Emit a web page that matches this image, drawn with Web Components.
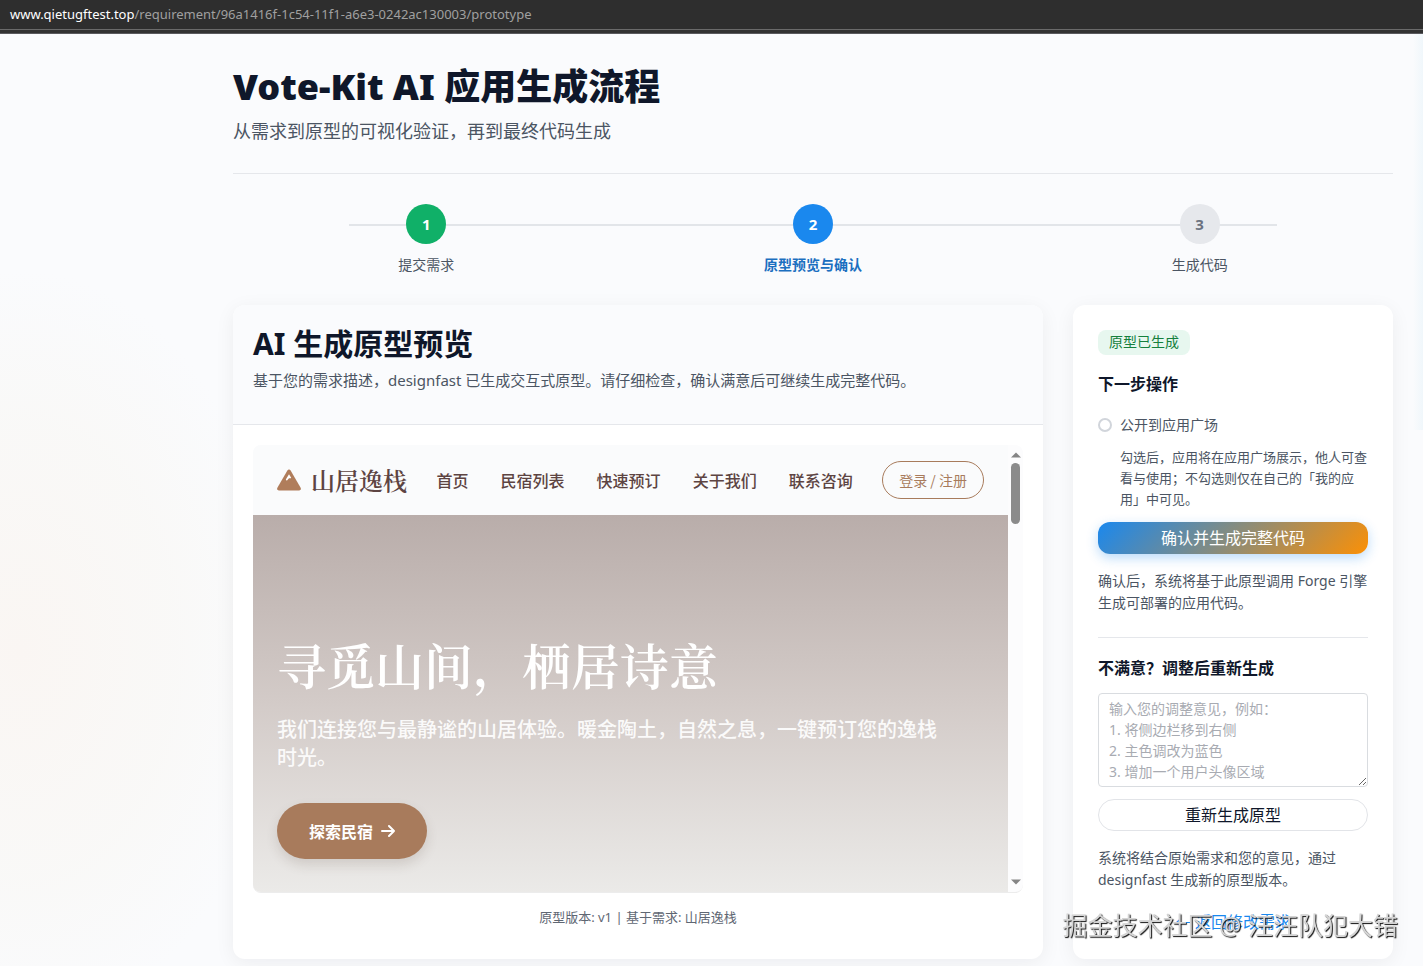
<!DOCTYPE html>
<html lang="zh-CN">
<head>
<meta charset="utf-8">
<title>Vote-Kit AI 应用生成流程</title>
<style>
    :root {
        --vk-font: "Noto Sans", "Noto Sans CJK SC", sans-serif;
        --vk-text: #0f172a;
        --vk-muted: #4b5563;
        --vk-line: #e5e7eb;
        --vk-primary: #1a88ee;
        --vk-clay: #a87b5c;
        --vk-shadow: 0 4px 20px rgba(15, 23, 42, 0.06);
    }
    body {
        margin: 0;
        min-height: 100vh;
        color: var(--vk-text);
        font-family: var(--vk-font);
        background:
            radial-gradient(ellipse 260px 380px at 20px 650px, #faf6f3, rgba(249, 248, 246, 0.8) 60%, transparent),
            linear-gradient(to right, transparent calc(100% - 10px), #f0f7fb) no-repeat 0 0 / 100% 430px,
            #fafbfd;
    }
</style>
</head>
<body>
<address-bar host="www.qietugftest.top" path="/requirement/96a1416f-1c54-11f1-a6e3-0242ac130003/prototype"></address-bar>
<app-page>
    <page-header heading="Vote-Kit AI 应用生成流程">从需求到原型的可视化验证，再到最终代码生成</page-header>
    <step-bar>
        <step-item number="1" state="done">提交需求</step-item>
        <step-item number="2" state="active">原型预览与确认</step-item>
        <step-item number="3">生成代码</step-item>
    </step-bar>
    <main-columns>
        <preview-card heading="AI 生成原型预览">
            <span slot="desc">基于您的需求描述，designfast 已生成交互式原型。请仔细检查，确认满意后可继续生成完整代码。</span>
            <inn-site></inn-site>
            <span slot="footer">原型版本: v1 | 基于需求: 山居逸栈</span>
        </preview-card>
        <action-panel></action-panel>
    </main-columns>
</app-page>
<water-mark>掘金技术社区 @ 汪汪队犯大错</water-mark>

<script>
    // attaches an open shadow root and fills it
    function render(el, html) {
        el.attachShadow({ mode: 'open' }).innerHTML = html;
    }

    class AddressBar extends HTMLElement {
        constructor() {
            super();
            render(this, `
            <style>
                :host {
                    display: block;
                    height: 34px;
                    box-sizing: border-box;
                    padding: 0 10px;
                    font-size: 13px;
                    line-height: 28px;
                    color: #a0a0a0;
                    background: linear-gradient(#2e2e2e 29px, #6a6a6a 29px, #6a6a6a 30px, #333 30px, #333 33px, #5a5a5e 33px);
                }
                b { font-weight: 400; color: #fff; }
            </style>
            <div><b>${this.getAttribute('host')}</b>${this.getAttribute('path')}</div>
            `);
        }
    }

    class AppPage extends HTMLElement {
        constructor() {
            super();
            render(this, `
            <style>
                :host { display: block; padding: 32px 30px 7px 233px; }
            </style>
            <slot></slot>
            `);
        }
    }

    class PageHeader extends HTMLElement {
        constructor() {
            super();
            render(this, `
            <style>
                :host {
                    display: block;
                    padding-bottom: 26px;
                    border-bottom: 1px solid var(--vk-line);
                }
                h1 {
                    margin: 0 0 7px;
                    font-size: 36px;
                    line-height: 42px;
                    font-weight: 900;
                }
                p {
                    margin: 0;
                    font-size: 18px;
                    line-height: 32px;
                    color: var(--vk-muted);
                }
            </style>
            <h1>${this.getAttribute('heading')}</h1>
            <p><slot></slot></p>
            `);
        }
    }

    class StepBar extends HTMLElement {
        constructor() {
            super();
            render(this, `
            <style>
                :host {
                    display: grid;
                    grid-template-columns: repeat(3, 1fr);
                    padding: 30px 0;
                    /* the rail runs behind the circles */
                    background: linear-gradient(#e2e5e9, #e2e5e9) no-repeat center 50px / 80% 2px;
                }
            </style>
            <slot></slot>
            `);
        }
    }

    class StepItem extends HTMLElement {
        constructor() {
            super();
            render(this, `
            <style>
                :host {
                    display: flex;
                    flex-direction: column;
                    align-items: center;
                    gap: 10px;
                    font-size: 14px;
                    line-height: 22px;
                    color: var(--vk-muted);
                }
                i {
                    width: 40px;
                    height: 40px;
                    border-radius: 50%;
                    background: #e6e8ec;
                    color: #6b7280;
                    font-size: 15px;
                    font-style: normal;
                    font-weight: 700;
                    line-height: 40px;
                    text-align: center;
                }
                :host([state="done"]) i { background: #10b068; color: #fff; }
                :host([state="active"]) i { background: var(--vk-primary); color: #fff; }
                :host([state="active"]) { color: #1b6fc0; font-weight: 700; }
            </style>
            <i>${this.getAttribute('number')}</i>
            <span><slot></slot></span>
            `);
        }
    }

    class MainColumns extends HTMLElement {
        constructor() {
            super();
            render(this, `
            <style>
                :host {
                    display: grid;
                    grid-template-columns: minmax(0, 1fr) 320px;
                    gap: 30px;
                    margin-top: -1px;
                }
            </style>
            <slot></slot>
            `);
        }
    }

    class PreviewCard extends HTMLElement {
        constructor() {
            super();
            render(this, `
            <style>
                :host {
                    display: block;
                    border-radius: 12px;
                    background: #fff;
                    box-shadow: var(--vk-shadow);
                    overflow: hidden;
                }
                header {
                    padding: 20px 20px 32px;
                    background: #fafbfd;
                    border-bottom: 1px solid var(--vk-line);
                }
                h2 { margin: 0; font-size: 30px; line-height: 38px; }
                p {
                    margin: 5px 0 0;
                    font-size: 15px;
                    line-height: 24px;
                    color: var(--vk-muted);
                }
                .body { padding: 20px 20px 0; }
                footer {
                    padding: 12px 20px 30px;
                    font-size: 13px;
                    line-height: 24px;
                    color: #5f6773;
                    text-align: center;
                }
            </style>
            <header>
                <h2>${this.getAttribute('heading')}</h2>
                <p><slot name="desc"></slot></p>
            </header>
            <div class="body"><slot></slot></div>
            <footer><slot name="footer"></slot></footer>
            `);
        }
    }

    // the generated site shown inside the preview frame
    class InnSite extends HTMLElement {
        constructor() {
            super();
            const links = ['首页', '民宿列表', '快速预订', '关于我们', '联系咨询'];
            render(this, `
            <style>
                :host {
                    display: grid;
                    grid-template-columns: minmax(0, 1fr) 15px;
                    border-bottom: 1px solid #ececec;
                    border-radius: 8px;
                    overflow: hidden;
                    background: #fcfcfd;
                    font-family: "Noto Sans CJK SC", sans-serif;
                }
                nav {
                    display: flex;
                    align-items: center;
                    justify-content: space-between;
                    height: 70px;
                    box-sizing: border-box;
                    padding: 0 24px;
                    background: #fafbfc;
                }
                a { color: #5d4442; text-decoration: none; }
                .logo {
                    display: flex;
                    align-items: center;
                    gap: 10px;
                    font: 600 24px/32px "Noto Serif CJK SC", "Noto Serif SC", "Noto Sans CJK SC", serif;
                }
                .links {
                    display: flex;
                    gap: 32px;
                    font-size: 16px;
                    font-weight: 500;
                }
                nav button {
                    height: 38px;
                    padding: 0 16px;
                    border: 1px solid var(--vk-clay);
                    border-radius: 19px;
                    background: none;
                    color: var(--vk-clay);
                    font: 14px/20px "Noto Sans CJK SC", sans-serif;
                }
                .hero {
                    padding: 120px 64px 33px 24px;
                    color: #fff;
                    background: linear-gradient(#b9adaa, #d3cbc8 50%, #ebeae8);
                }
                h1 {
                    margin: 0 0 22px;
                    font: 600 49px/58px "Noto Serif CJK SC", "Noto Serif SC", "Noto Sans CJK SC", serif;
                }
                p { margin: 0 0 32px; font-size: 20px; font-weight: 500; line-height: 28px; opacity: 0.9; }
                .hero button {
                    display: flex;
                    align-items: center;
                    gap: 8px;
                    height: 56px;
                    padding: 0 32px;
                    border: 0;
                    border-radius: 28px;
                    background: var(--vk-clay);
                    color: #fff;
                    box-shadow: 0 6px 12px rgba(80, 60, 50, 0.15);
                    font: 700 16px/24px "Noto Sans CJK SC", sans-serif;
                }
                .scroll {
                    display: flex;
                    flex-direction: column;
                    align-items: center;
                    padding: 7px 0;
                }
                .thumb {
                    width: 9px;
                    height: 61px;
                    margin-top: 5px;
                    border-radius: 5px;
                    background: #8b8b8b;
                }
                .scroll svg:last-child { margin-top: auto; }
            </style>
            <div>
                <nav>
                    <a class="logo" href="#">
                        <svg width="24" height="22" viewBox="0 0 24 22"><path fill="#b07d5b" d="M12 0.500C12.700 0.500 13.200 0.900 13.600 1.500L23.500 18.500C24.400 20.100 23.700 21.500 22 21.500H2C0.300 21.500 -0.400 20.100 0.500 18.500L10.400 1.500C10.800 0.900 11.300 0.500 12 0.500Z"/><path fill="#fff" d="M12 5.200L8.800 10.600L9.800 11.800L12 9.200L13.800 9.200L14.200 8.800Z"/></svg>
                        山居逸栈
                    </a>
                    <div class="links">${links.map(t => `<a href="#">${t}</a>`).join('')}</div>
                    <button type="button">登录 / 注册</button>
                </nav>
                <section class="hero">
                    <h1>寻觅山间，栖居诗意</h1>
                    <p>我们连接您与最静谧的山居体验。暖金陶土，自然之息，一键预订您的逸栈时光。</p>
                    <button type="button">探索民宿
                        <svg width="14" height="14" viewBox="0 0 14 14" fill="none" stroke="#fff" stroke-width="2" stroke-linecap="round" stroke-linejoin="round"><path d="M1 7H13M8 2L13 7L8 12"/></svg>
                    </button>
                </section>
            </div>
            <div class="scroll">
                <svg width="10" height="6" viewBox="0 0 10 6"><path fill="#858585" d="M5 0.500L10 5.500H0Z"/></svg>
                <div class="thumb"></div>
                <svg width="10" height="6" viewBox="0 0 10 6"><path fill="#858585" d="M0 0.500H10L5 5.500Z"/></svg>
            </div>
            `);
        }
    }

    class ActionPanel extends HTMLElement {
        constructor() {
            super();
            render(this, `
            <style>
                :host {
                    display: block;
                    padding: 25px;
                    border-radius: 12px;
                    background: #fff;
                    box-shadow: var(--vk-shadow);
                }
                .badge {
                    display: inline-block;
                    padding: 0 11px 1px;
                    border-radius: 8px;
                    background: #e7f7ef;
                    color: #15803d;
                    font-size: 14px;
                    line-height: 24px;
                    vertical-align: top;
                }
                h3 { margin: 17px 0; font-size: 16px; line-height: 24px; }
                label { display: flex; align-items: center; gap: 8px; font-size: 14px; line-height: 24px; color: var(--vk-muted); }
                h3 label { display: block; font-size: 16px; color: var(--vk-text); }
                input {
                    appearance: none;
                    width: 14px;
                    height: 14px;
                    margin: 0;
                    border: 2px solid #d1d5db;
                    border-radius: 50%;
                    background: #fff;
                }
                p { margin: 0; font-size: 14px; line-height: 22px; color: var(--vk-muted); }
                .hint { margin: 10px 0 12px 22px; font-size: 13px; line-height: 21px; }
                button {
                    display: block;
                    width: 100%;
                    height: 32px;
                    padding: 0;
                    border-radius: 16px;
                    font: 16px/30px var(--vk-font);
                }
                .confirm {
                    margin-bottom: 16px;
                    border: 0;
                    border-radius: 12px;
                    color: #fff;
                    background: linear-gradient(135deg, #1a88ee, #fb9006);
                    box-shadow: 0 4px 12px rgba(26, 136, 238, 0.3);
                }
                hr { margin: 23px 0 18px; border: 0; border-top: 1px solid var(--vk-line); }
                h3.adjust { margin: 0 0 13px; }
                textarea {
                    display: block;
                    width: 100%;
                    box-sizing: border-box;
                    margin-bottom: 12px;
                    padding: 4px 10px;
                    border: 1px solid #d9dce0;
                    border-radius: 4px;
                    font: 14px/21px var(--vk-font);
                }
                textarea::placeholder { color: #a8abb2; }
                .regen {
                    margin-bottom: 16px;
                    border: 1px solid #e2e4e8;
                    background: #fff;
                    color: var(--vk-text);
                }
                .back {
                    display: block;
                    margin-top: 19px;
                    text-align: center;
                    font-size: 16px;
                    line-height: 24px;
                    color: var(--vk-primary);
                    text-decoration: none;
                }
            </style>
            <span class="badge">原型已生成</span>
            <h3>下一步操作</h3>
            <label><input type="checkbox">公开到应用广场</label>
            <p class="hint">勾选后，应用将在应用广场展示，他人可查看与使用；不勾选则仅在自己的「我的应用」中可见。</p>
            <button class="confirm" type="button">确认并生成完整代码</button>
            <p>确认后，系统将基于此原型调用 Forge 引擎生成可部署的应用代码。</p>
            <hr>
            <h3 class="adjust"><label for="opinion">不满意？调整后重新生成</label></h3>
            <textarea id="opinion" rows="4" placeholder="输入您的调整意见，例如：&#10;1. 将侧边栏移到右侧&#10;2. 主色调改为蓝色&#10;3. 增加一个用户头像区域"></textarea>
            <button class="regen" type="button">重新生成原型</button>
            <p>系统将结合原始需求和您的意见，通过 designfast 生成新的原型版本。</p>
            <a class="back" href="#">← 返回修改需求</a>
            `);
        }
    }

    // stamped over the bottom right corner of the window
    class WaterMark extends HTMLElement {
        constructor() {
            super();
            render(this, `
            <style>
                :host {
                    position: fixed;
                    right: 25px;
                    bottom: 23px;
                    font-size: 25px;
                    line-height: 36px;
                    color: #d4d4d4;
                    text-shadow: 1px 1px 1px #111;
                    pointer-events: none;
                }
            </style>
            <slot></slot>
            `);
        }
    }

    customElements.define('address-bar', AddressBar);
    customElements.define('app-page', AppPage);
    customElements.define('page-header', PageHeader);
    customElements.define('step-bar', StepBar);
    customElements.define('step-item', StepItem);
    customElements.define('main-columns', MainColumns);
    customElements.define('preview-card', PreviewCard);
    customElements.define('inn-site', InnSite);
    customElements.define('action-panel', ActionPanel);
    customElements.define('water-mark', WaterMark);
</script>
</body>
</html>
